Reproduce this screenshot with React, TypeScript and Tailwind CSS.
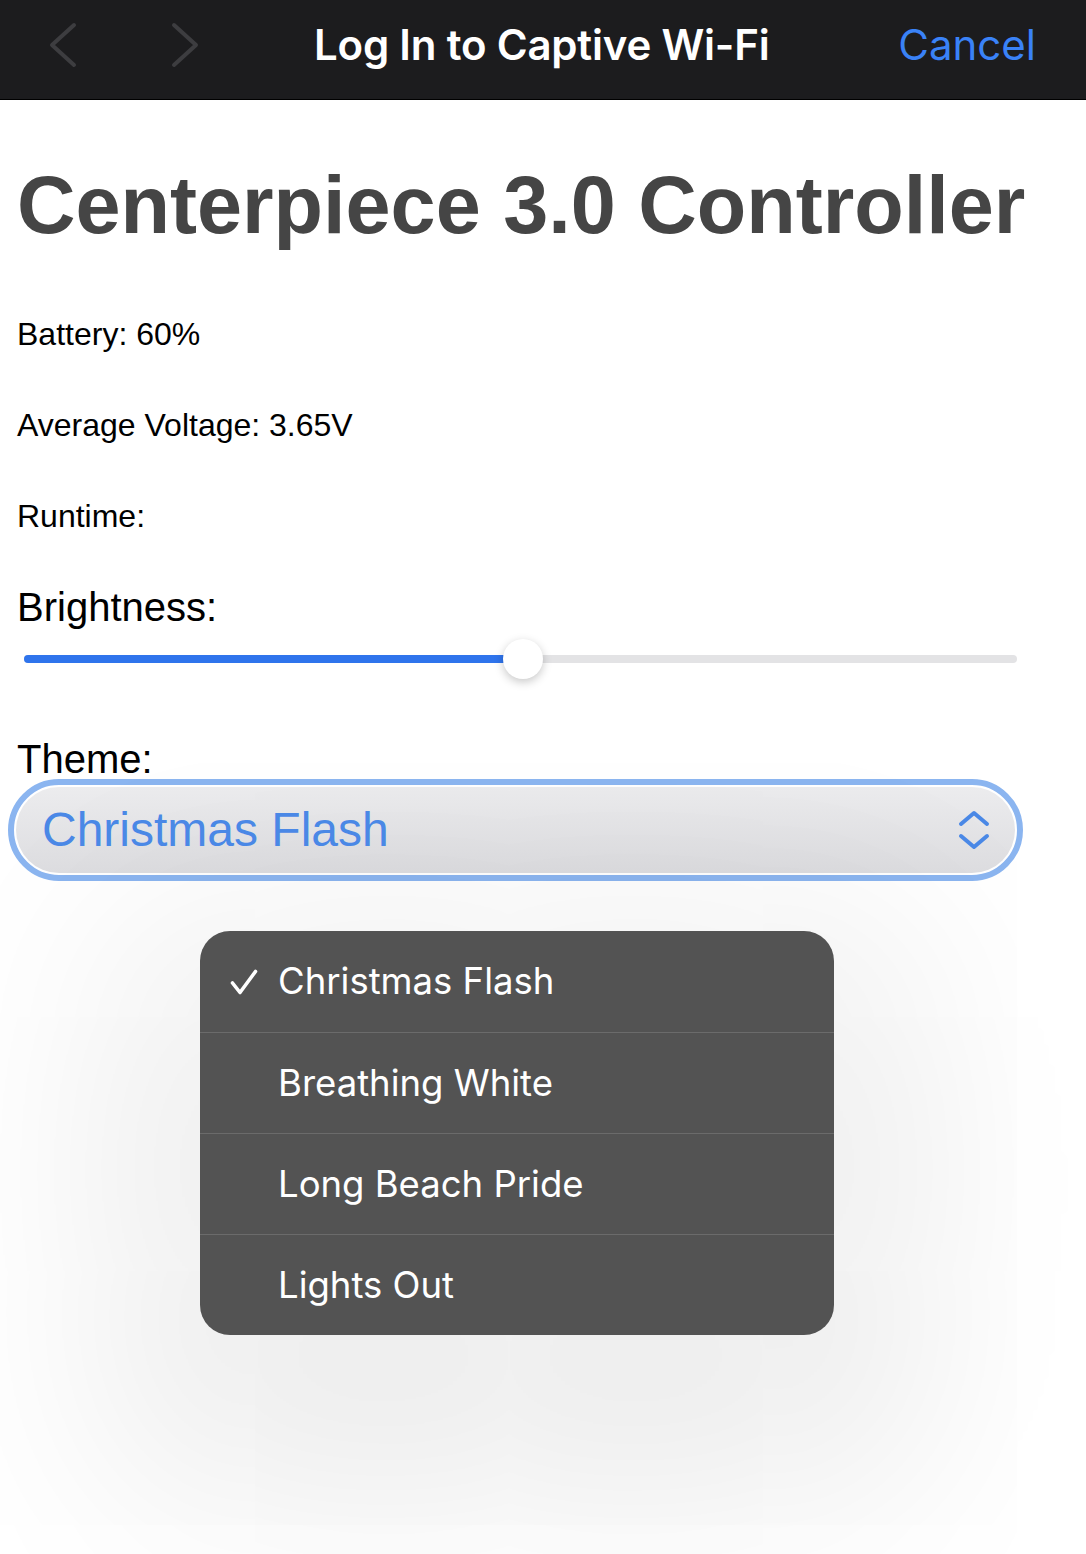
import React from 'react';

const themes = ['Christmas Flash', 'Breathing White', 'Long Beach Pride', 'Lights Out'];

function NavChevron({ dir }: { dir: 'left' | 'right' }) {
  return (
    <svg width="30" height="46" viewBox="0 0 30 46" fill="none">
      <path
        d={dir === 'left' ? 'M26 3 L4 23 L26 43' : 'M4 3 L26 23 L4 43'}
        stroke="#3d3d40"
        strokeWidth="4"
        strokeLinecap="round"
        strokeLinejoin="round"
      />
    </svg>
  );
}

export default function App() {
  const selected = 'Christmas Flash';
  const brightness = 50.3;

  return (
    <div className="min-h-[1554px] w-full overflow-hidden bg-white">
      {/* captive portal bar */}
      <div
        className="flex h-[100px] items-center border-b border-black bg-[#1c1c1e] pb-[10px] pl-[48px] pr-[50px]"
        style={{ fontFamily: 'Inter, "Noto Sans", sans-serif' }}
      >
        <div className="flex items-center gap-[92px]">
          <NavChevron dir="left" />
          <NavChevron dir="right" />
        </div>
        <div className="ml-[114px] text-[42px] font-semibold tracking-[-0.2px] text-white">Log In to Captive Wi-Fi</div>
        <div className="ml-auto text-[42px] text-[#3a82f7]">Cancel</div>
      </div>

      <div className="px-[17px]" style={{ fontFamily: '"Liberation Sans", Arial, sans-serif' }}>
        <h1 className="mt-[64px] text-[81px] font-bold leading-[82px] text-[#454545]">Centerpiece 3.0 Controller</h1>

        <div className="mt-[72px] flex flex-col gap-[59px] text-[32px] leading-[32px] text-black">
          <p>Battery: 60%</p>
          <p>Average Voltage: 3.65V</p>
          <p>Runtime:</p>
        </div>

        <p className="mt-[55px] text-[40px] leading-[40px] text-black">Brightness:</p>
        <div className="ml-[7px] mr-[52px] mt-[12px] flex h-[40px] items-center">
          <div className="relative h-[8px] w-full rounded-full bg-[#e3e3e5]">
            <div className="h-full rounded-full bg-[#2f74ec]" style={{ width: `${brightness}%` }} />
            <div
              className="absolute top-1/2 h-[40px] w-[40px] -translate-x-1/2 -translate-y-1/2 rounded-full bg-white shadow-[0_3px_10px_rgba(0,0,0,0.22)]"
              style={{ left: `${brightness}%` }}
            />
          </div>
        </div>

        <p className="mt-[60px] text-[40px] leading-[40px] text-black">Theme:</p>
        <div className="-ml-[9px] w-[1015px] rounded-full border-[6px] border-[#8bb5f0] bg-white p-[2px]">
          <div className="flex h-[86px] items-center rounded-full bg-gradient-to-b from-[#ececee] to-[#dddde0] pl-[26px] pr-[24px]">
            <span className="text-[48px] text-[#4a88e6]">{selected}</span>
            <svg className="ml-auto" width="34" height="40" viewBox="0 0 34 40" fill="none">
              <path d="M4 14 L17 3 L30 14" stroke="#4a88e6" strokeWidth="4" strokeLinecap="round" strokeLinejoin="round" />
              <path d="M4 26 L17 37 L30 26" stroke="#4a88e6" strokeWidth="4" strokeLinecap="round" strokeLinejoin="round" />
            </svg>
          </div>
        </div>

        {/* picker menu */}
        <div
          className="ml-[183px] mt-[50px] w-[634px] overflow-hidden rounded-[30px] bg-[#535353] shadow-[0_80px_220px_90px_rgba(0,0,0,0.08)]"
          style={{ fontFamily: 'Inter, "Noto Sans", sans-serif' }}
        >
          {themes.map((t, i) => (
            <div
              key={t}
              className={`relative flex h-[101px] items-center pl-[78px] text-[36.5px] text-white ${i > 0 ? 'border-t border-[#6b6b6b]' : ''}`}
            >
              {t === selected && (
                <svg className="absolute left-[30px] top-[38px]" width="28" height="26" viewBox="0 0 28 26" fill="none">
                  <path d="M2.5 14 L10 23.5 L25.5 2.5" stroke="white" strokeWidth="3.6" strokeLinecap="round" strokeLinejoin="round" />
                </svg>
              )}
              {t}
            </div>
          ))}
        </div>
      </div>
    </div>
  );
}
